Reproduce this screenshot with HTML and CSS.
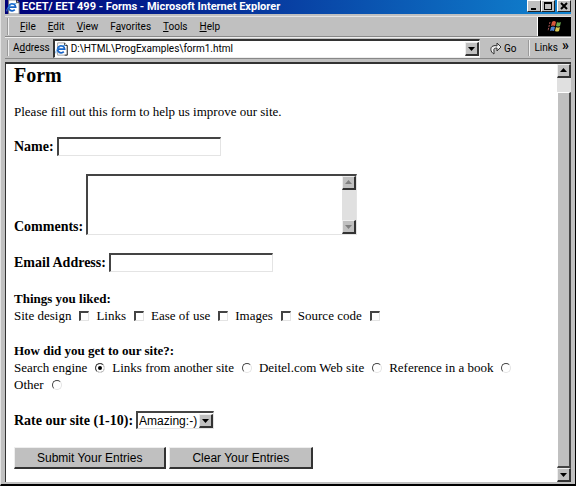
FILE: index.html
```html
<!DOCTYPE html>
<html lang="en">
<head>
  <meta charset="UTF-8" />
  <meta name="viewport" content="width=device-width, initial-scale=1.0"/>
  <title>ECET/ EET 499 - Forms</title>
  <link rel="stylesheet" href="styles.css">
</head>
<body>
  <div class="window">
    <header class="title-bar">
      <svg class="page-icon" viewBox="0 0 16 16" aria-hidden="true">
        <path d="M3 0h9l3 3v13H3z" fill="#fff" stroke="#777"/>
        <path d="M12 0v3h3" fill="none" stroke="#333"/>
        <path d="M10 11a4 4 0 1 1 1-3H4" fill="none" stroke="#1763c6" stroke-width="2"/>
        <path d="M1 13C0 9 7 3 12 4" fill="none" stroke="#4b9be8"/>
      </svg>
      <span class="title">ECET/ EET 499 - Forms - Microsoft Internet Explorer</span>
      <div class="window-buttons">
        <button type="button" aria-label="Minimize"><svg viewBox="0 0 12 11"><path d="M3 7h5v2H3z"/></svg></button>
        <button type="button" aria-label="Maximize"><svg viewBox="0 0 12 11"><path d="M2 1h8v8H2zM3 3v5h6V3z" fill-rule="evenodd"/></svg></button>
        <button type="button" aria-label="Close" class="close"><svg viewBox="0 0 12 11"><path d="M3 2l6 6M9 2L3 8" stroke="#000" stroke-width="2"/></svg></button>
      </div>
    </header>

    <div class="menu-bar">
      <nav class="menu">
        <a href="#"><u>F</u>ile</a>
        <a href="#"><u>E</u>dit</a>
        <a href="#"><u>V</u>iew</a>
        <a href="#">F<u>a</u>vorites</a>
        <a href="#"><u>T</u>ools</a>
        <a href="#"><u>H</u>elp</a>
      </nav>
      <div class="brand">
        <svg viewBox="0 0 16 14" aria-hidden="true">
          <path d="M5 2q2-2 4 0L8 6Q6 5 4 6z" fill="#d8583c"/>
          <path d="M10 2q2 1 4 0l-1 4q-2 1-4 0z" fill="#69a84f"/>
          <path d="M4 7q2-1 4 0l-1 4q-2-1-4 0z" fill="#4c80cc"/>
          <path d="M9 7q2 1 4 0l-1 4q-2 1-4 0z" fill="#d8c750"/>
          <path d="M3 2L1 11" stroke="#a55" stroke-dasharray="2 1"/>
        </svg>
      </div>
    </div>

    <div class="address-bar">
      <label for="address">A<u>d</u>dress</label>
      <div class="address-box">
        <svg class="page-icon" viewBox="0 0 16 16" aria-hidden="true">
          <path d="M3 1h8l3 3v11H3z" fill="#fff" stroke="#999"/>
          <path d="M11 1v3h3v11h-3" fill="none" stroke="#222"/>
          <path d="M10 11a4 4 0 1 1 1-3H4" fill="none" stroke="#1763c6" stroke-width="2"/>
          <path d="M1 13C0 9 7 3 12 4" fill="none" stroke="#4b9be8"/>
        </svg>
        <input type="text" id="address" value="D:\HTML\ProgExamples\form1.html">
        <button type="button" class="arrow" aria-label="Show addresses"><svg viewBox="0 0 11 11"><path d="M2 4h7L5.500 8z"/></svg></button>
      </div>
      <button type="button" class="go">
        <svg viewBox="0 0 12 14" aria-hidden="true"><path d="M4 13C0 11 0 6 3 5q2-1 4 0V2l4 4-4 4V7Q3 7 4 10z" fill="#eee" stroke="#333"/></svg>Go
      </button>
      <div class="links"><a href="#">Links</a><span class="chevrons">»</span></div>
    </div>

    <div class="viewport">
      <main class="page">
        <h2>Form</h2>
        <p>Please fill out this form to help us improve our site.</p>
        <form>
          <div class="row">
            <label for="name">Name:</label>
            <input type="text" id="name" class="text-input">
          </div>
          <div class="row comments-row">
            <label for="comments">Comments:</label>
            <div class="text-area">
              <textarea id="comments"></textarea>
              <div class="scrollbar disabled">
                <span class="arrow"><svg viewBox="0 0 11 11"><path d="M2 7h7L5.500 3z"/></svg></span>
                <span class="arrow"><svg viewBox="0 0 11 11"><path d="M2 4h7L5.500 8z"/></svg></span>
              </div>
            </div>
          </div>
          <div class="row">
            <label for="email">Email Address:</label>
            <input type="text" id="email" class="text-input">
          </div>
          <fieldset>
            <legend>Things you liked:</legend>
            <div class="options">
              <label>Site design <input type="checkbox"></label>
              <label>Links <input type="checkbox"></label>
              <label>Ease of use <input type="checkbox"></label>
              <label>Images <input type="checkbox"></label>
              <label>Source code <input type="checkbox"></label>
            </div>
          </fieldset>
          <fieldset>
            <legend>How did you get to our site?:</legend>
            <div class="options">
              <label>Search engine <input type="radio" name="source" checked></label>
              <label>Links from another site <input type="radio" name="source"></label>
              <label>Deitel.com Web site <input type="radio" name="source"></label>
              <label>Reference in a book <input type="radio" name="source"></label>
              <label>Other <input type="radio" name="source"></label>
            </div>
          </fieldset>
          <div class="row">
            <label for="rating">Rate our site (1-10):</label>
            <div class="select-box">
              <select id="rating">
                <option>Amazing:-)</option>
              </select>
              <span class="arrow"><svg viewBox="0 0 11 11"><path d="M2 4h7L5.500 8z"/></svg></span>
            </div>
          </div>
          <div class="row">
            <button type="submit" class="form-button">Submit Your Entries</button>
            <button type="reset" class="form-button">Clear Your Entries</button>
          </div>
        </form>
      </main>
      <div class="scrollbar">
        <span class="arrow"><svg viewBox="0 0 11 11"><path d="M2 7h7L5.500 3z"/></svg></span>
        <span class="thumb"></span>
        <span class="arrow"><svg viewBox="0 0 11 11"><path d="M2 4h7L5.500 8z"/></svg></span>
      </div>
    </div>
  </div>
</body>
</html>
```
FILE: styles.css
```css
* {
  box-sizing: border-box;
}
body {
  margin: 0;
  background-color: #000;
  font-family: Roboto, Arial, sans-serif;
  font-size: 10px;
  color: #000;
}
svg {
  display: block;
}
button, input, select, textarea {
  font-family: inherit;
  font-size: inherit;
  color: inherit;
  margin: 0;
  padding: 0;
  border: none;
  border-radius: 0;
  outline: none;
}
a {
  color: inherit;
  text-decoration: none;
}
.window {
  display: flex;
  flex-direction: column;
  min-height: 100vh;
  margin-right: 1px;
  padding-left: 4px;
  padding-right: 4px;
  background-color: #c0c0c0;
  border-left: 1px solid #e4e4e4;
  border-bottom: 2px solid #000;
}

/* title bar */
.title-bar {
  display: flex;
  align-items: flex-start;
  height: 14px;
  padding-left: 1px;
  background: linear-gradient(to right, #000078, #06329a 40%, #1084d0);
}
.page-icon {
  flex: none;
  width: 14px;
  height: 14px;
}
.title {
  flex: 1;
  padding-left: 2px;
  color: #fff;
  font-size: 11px;
  font-weight: bold;
  line-height: 13px;
  white-space: nowrap;
}
.window-buttons {
  display: flex;
}
.window-buttons button {
  width: 14px;
  height: 12px;
  background-color: #c0c0c0;
  border: 1px solid #fff;
  border-right-color: #222;
  border-bottom-color: #222;
}
.window-buttons .close {
  margin-left: 2px;
}

/* toolbars */
.menu-bar {
  display: flex;
  justify-content: space-between;
  height: 21px;
  margin-top: 2px;
  border-top: 1px solid #e4e4e4;
  border-bottom: 1px solid #888;
}
.menu {
  display: flex;
  align-items: center;
  gap: 12px;
  margin: 1px 0 1px 2px;
  padding-left: 11px;
  border-left: 2px groove #eee;
}
.brand {
  display: flex;
  align-items: center;
  justify-content: center;
  width: 34px;
  background-color: #000;
  border-left: 1px solid #fff;
}
.brand svg {
  width: 16px;
  height: 14px;
}
.address-bar {
  display: flex;
  align-items: center;
  height: 22px;
  border-top: 1px solid #eee;
  border-bottom: 1px solid #888;
}
.address-bar label {
  margin-left: 2px;
  padding-left: 4px;
  border-left: 2px groove #eee;
  line-height: 16px;
}
.address-box {
  display: flex;
  flex: 1;
  align-items: center;
  height: 19px;
  margin-left: 3px;
  background-color: #fff;
  border: 1px solid #eee;
  border-top: 2px solid #333;
  border-left: 2px solid #333;
}
.address-box input {
  flex: 1;
  min-width: 0;
  height: 14px;
  padding-left: 2px;
  background-color: transparent;
}
.arrow {
  display: flex;
  flex: none;
  align-items: center;
  justify-content: center;
  width: 14px;
  height: 14px;
  background-color: #c0c0c0;
  border: 1px solid #eee;
  border-right: 2px solid #333;
  border-bottom: 2px solid #333;
}
.arrow svg {
  width: 11px;
  height: 11px;
}
.go {
  display: flex;
  align-items: center;
  gap: 2px;
  margin-left: 10px;
  background-color: transparent;
}
.go svg {
  width: 12px;
  height: 14px;
}
.links {
  display: flex;
  margin-left: 12px;
  padding-left: 4px;
  border-left: 2px groove #eee;
  line-height: 16px;
}
.chevrons {
  padding: 0 2px 0 4px;
  font-size: 14px;
  font-weight: bold;
  line-height: 10px;
}

/* document area */
.viewport {
  display: flex;
  flex: 1;
  margin-top: 3px;
  margin-bottom: 2px;
  background-color: #fff;
  border-top: 2px solid #333;
  border-left: 1px solid #333;
}
.page {
  flex: 1;
  min-width: 0;
  padding: 0 0 12px 8px;
  font-family: "Liberation Serif", "Times New Roman", serif;
  font-size: 13px;
  line-height: 17px;
}
.page h2 {
  margin: 0;
  font-size: 20px;
  line-height: 22px;
}
.page p {
  margin: 17px 0;
}
.page form {
  display: flex;
  flex-direction: column;
  gap: 18px;
}
.row {
  display: flex;
  align-items: center;
  gap: 3px;
}
.row label, legend {
  font-weight: bold;
}
.row label {
  font-size: 14px;
}
.comments-row {
  align-items: flex-end;
}
.text-input {
  width: 164px;
  height: 19px;
  padding: 0 2px;
  border: 1px solid #e4e4e4;
  border-top: 2px solid #444;
  border-left: 2px solid #444;
}
.text-area {
  display: flex;
  width: 271px;
  height: 61px;
  border: 1px solid #e4e4e4;
  border-top: 2px solid #444;
  border-left: 2px solid #444;
}
.text-area textarea {
  flex: 1;
  min-width: 0;
  resize: none;
  overflow: hidden;
}
fieldset {
  min-width: 0;
  margin: 0;
  padding: 0;
  border: none;
}
legend {
  padding: 0;
}
.options {
  display: flex;
  flex-wrap: wrap;
  column-gap: 7px;
}
.options label {
  display: flex;
  align-items: center;
  gap: 8px;
  white-space: nowrap;
}
.options input {
  appearance: none;
  width: 10px;
  height: 10px;
  background-color: #fff;
  border: 1px solid #e4e4e4;
  border-top: 2px solid #444;
  border-left: 2px solid #444;
}
.options input[type="radio"] {
  border-width: 1px;
  border-radius: 50%;
}
.options input:checked {
  background-color: #000;
  box-shadow: inset 0 0 0 2px #fff;
}
.select-box {
  display: flex;
  align-items: center;
  height: 18px;
  border: 1px solid #e4e4e4;
  border-top: 2px solid #444;
  border-left: 2px solid #444;
}
.select-box select {
  appearance: none;
  height: 15px;
  padding: 0 1px;
  background-color: #fff;
  font-family: "Liberation Sans", Arial, sans-serif;
  font-size: 12px;
}
.form-button {
  height: 22px;
  padding: 0 22px;
  background-color: #c0c0c0;
  border: 1px solid #eee;
  border-right: 2px solid #333;
  border-bottom: 2px solid #333;
  font-family: "Liberation Sans", Arial, sans-serif;
  font-size: 12px;
}

/* scrollbars */
.scrollbar {
  display: flex;
  flex-direction: column;
  justify-content: space-between;
  width: 14px;
  background-color: #e0e0e0;
}
.scrollbar .thumb {
  flex: 1;
  margin-top: 14px;
  background-color: #c0c0c0;
  border: 1px solid #fff;
  border-right: 2px solid #444;
  border-bottom: 2px solid #444;
}
.disabled path {
  fill: #808080;
}
```
